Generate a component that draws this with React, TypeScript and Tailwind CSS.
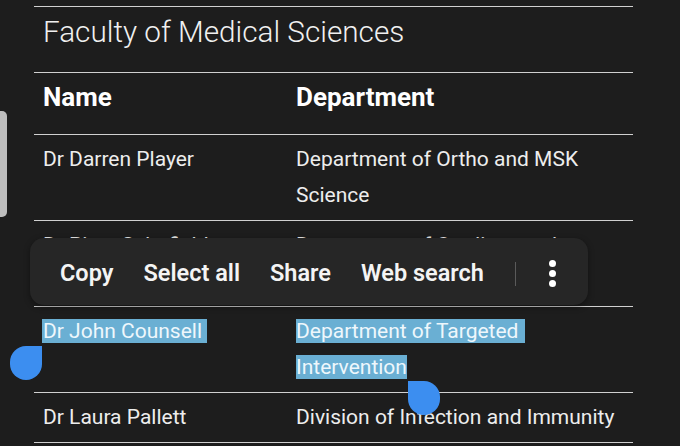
const rows = [
  { name: "Dr Darren Player", dept: ["Department of Ortho and MSK", "Science"] },
  { name: "Dr Piers Schofield", dept: ["Department of Cardiovascular", "Science"] },
];

function Row({ name, dept }: { name: React.ReactNode; dept: React.ReactNode }) {
  return (
    <div className="flex border-t border-[#d0d0d0] pt-[6px] pb-[7px] text-[21px] leading-[36px] text-[#ededed]">
      <div className="w-[262px] pl-[9px]">{name}</div>
      <div className="flex-1">{dept}</div>
    </div>
  );
}

export default function App() {
  return (
    <div className="relative w-[680px] h-[446px] overflow-hidden bg-[#1d1d1d] font-[Roboto,sans-serif]">
      {/* left scroll tab */}
      <div className="absolute left-0 top-[111px] w-[7px] h-[106px] rounded-r-[5px] bg-[#bdbdbd]" />

      <div className="ml-[34px] mt-[6px] w-[599px]">
        {/* caption */}
        <div className="border-t border-[#d0d0d0] pt-[5px] pb-[20px] pl-[9px] text-[29.7px] leading-[40px] font-light text-[#f0f0f0]">
          Faculty of Medical Sciences
        </div>

        {/* header */}
        <div className="flex border-t border-[#d0d0d0] pt-[6px] pb-[19px] text-[26px] leading-[36px] font-bold text-white">
          <div className="w-[262px] pl-[9px]">Name</div>
          <div className="flex-1">Department</div>
        </div>

        {rows.map((r, i) => (
          <Row
            key={i}
            name={r.name}
            dept={
              <>
                {r.dept[0]}
                <br />
                {r.dept[1]}
              </>
            }
          />
        ))}

        <Row
          name={<span className="-ml-[1px] pl-[1px] pr-[5px] bg-[#6aafd3] text-[#eef7fc]">Dr John Counsell</span>}
          dept={
            <>
              <span className="pr-[7px] bg-[#6aafd3] text-[#eef7fc]">Department of Targeted</span>
              <br />
              <span className="bg-[#6aafd3] text-[#eef7fc]">Intervention</span>
            </>
          }
        />

        <Row name="Dr Laura Pallett" dept="Division of Infection and Immunity" />
        <div className="border-t border-[#d0d0d0]" />
      </div>

      {/* selection handles */}
      <div className="absolute left-[10px] top-[346px] w-[32px] h-[34px] rounded-full rounded-tr-none bg-[#3c8ef0]" />
      <div className="absolute left-[408px] top-[381px] w-[32px] h-[34px] rounded-full rounded-tl-none bg-[#3c8ef0]" />

      {/* text selection toolbar */}
      <div className="absolute left-[30px] top-[238px] w-[558px] h-[67px] rounded-[14px] bg-[#262626] shadow-[0_2px_6px_rgba(0,0,0,0.4)] flex items-center pl-[30px] pt-[4px] gap-[31px] text-[23.5px] font-semibold text-[#f4f4f4]">
        <span>Copy</span>
        <span className="-ml-[1px]">Select all</span>
        <span className="-ml-[1px]">Share</span>
        <span className="-ml-[1px]">Web search</span>
        <div className="w-[1px] h-[24px] bg-[#5a5a5a]" />
        <div className="flex flex-col gap-[3px] ml-[2px]">
          <div className="w-[7px] h-[7px] rounded-full bg-white" />
          <div className="w-[7px] h-[7px] rounded-full bg-white" />
          <div className="w-[7px] h-[7px] rounded-full bg-white" />
        </div>
      </div>
    </div>
  );
}
